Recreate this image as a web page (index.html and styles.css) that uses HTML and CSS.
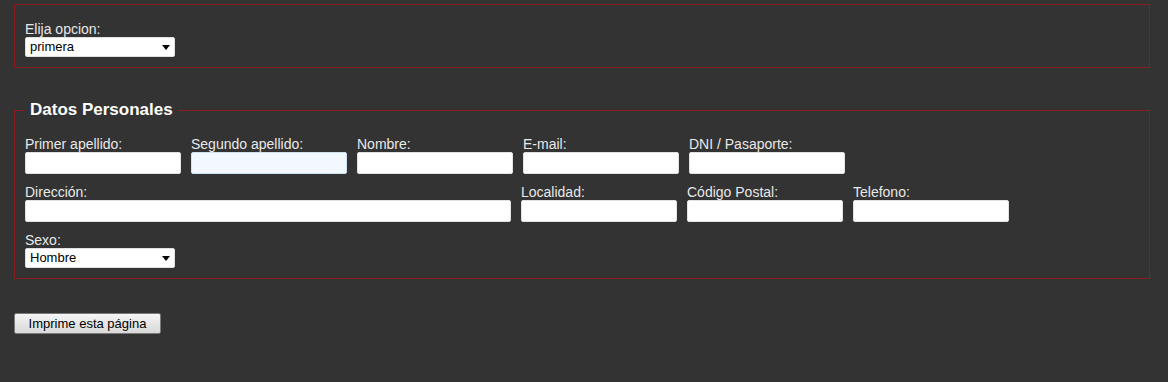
FILE: index.html
```html
<!DOCTYPE html>
<html lang="es">
<head>
<meta charset="utf-8">
<title>Formulario</title>
<link rel="stylesheet" href="styles.css">
</head>
<body>
<form class="form">
  <fieldset class="box box-first">
    <div class="field">
      <label class="lbl">Elija opcion:</label>
      <span class="sel-wrap"><select class="sel"><option>primera</option></select></span>
    </div>
  </fieldset>

  <fieldset class="box box-personal">
    <legend class="legend">Datos Personales</legend>
    <div class="row">
      <div class="field"><label class="lbl">Primer apellido:</label><input class="inp" type="text"></div>
      <div class="field"><label class="lbl">Segundo apellido:</label><input class="inp inp-focus" type="text"></div>
      <div class="field"><label class="lbl">Nombre:</label><input class="inp" type="text"></div>
      <div class="field"><label class="lbl">E-mail:</label><input class="inp" type="text"></div>
      <div class="field"><label class="lbl">DNI / Pasaporte:</label><input class="inp" type="text"></div>
    </div>
    <div class="row">
      <div class="field field-wide"><label class="lbl">Dirección:</label><input class="inp inp-wide" type="text"></div>
      <div class="field"><label class="lbl">Localidad:</label><input class="inp" type="text"></div>
      <div class="field"><label class="lbl">Código Postal:</label><input class="inp" type="text"></div>
      <div class="field"><label class="lbl">Telefono:</label><input class="inp" type="text"></div>
    </div>
    <div class="row row-last">
      <div class="field">
        <label class="lbl">Sexo:</label>
        <span class="sel-wrap sel-sexo"><select class="sel"><option>Hombre</option></select></span>
      </div>
    </div>
  </fieldset>

  <div class="actions">
    <button type="button" class="btn">Imprime esta página</button>
  </div>
</form>
</body>
</html>
```
FILE: styles.css
```css
html, body {
  margin: 0;
  padding: 0;
  background: #333333;
}
body {
  font-family: "Liberation Sans", Arial, sans-serif;
  color: #e6e6e6;
}
.form {
  padding: 4px 18px 0 14px;
}
.box {
  margin: 0;
  border: 1px solid #8a1c22;
  padding: 16px 10px 10px 10px;
  min-width: 0;
}
.box-personal {
  margin-top: 32px;
  padding-top: 16px;
}
.legend {
  font-size: 17px;
  font-weight: bold;
  line-height: 20px;
  color: #ffffff;
  padding: 0 5px;
  margin-left: 0;
}
.row {
  display: flex;
  gap: 10px;
  margin-bottom: 10px;
}
.row-last {
  margin-bottom: 0;
}
.field {
  display: flex;
  flex-direction: column;
  width: 156px;
}
.field-wide {
  width: 486px;
}
.lbl {
  display: block;
  font-size: 14px;
  line-height: 16px;
  height: 16px;
  color: #e8e8e8;
}
.inp {
  box-sizing: border-box;
  width: 156px;
  height: 22px;
  margin: 0;
  border: 1px solid #e2e2e2;
  border-radius: 2px;
  background: #ffffff;
  padding: 0 4px;
  font-family: "Liberation Sans", Arial, sans-serif;
  font-size: 13px;
}
.inp-wide {
  width: 486px;
}
.inp-focus {
  background: #f3f8ff;
  border-color: #cfe2f5;
}
.sel-wrap {
  position: relative;
  display: block;
  width: 150px;
  height: 20px;
}
.sel-wrap::after {
  content: "";
  position: absolute;
  right: 5px;
  top: 8px;
  width: 0;
  height: 0;
  border-left: 4px solid transparent;
  border-right: 4px solid transparent;
  border-top: 5px solid #000000;
  pointer-events: none;
}
.sel {
  -webkit-appearance: none;
  appearance: none;
  box-sizing: border-box;
  width: 150px;
  height: 20px;
  margin: 0;
  border: 1px solid #e0e0e0;
  border-radius: 2px;
  background: #ffffff;
  color: #000000;
  padding: 0 4px;
  font-family: "Liberation Sans", Arial, sans-serif;
  font-size: 13px;
  line-height: 18px;
}
.actions {
  margin-top: 34px;
}
.btn {
  box-sizing: border-box;
  width: 147px;
  height: 21px;
  margin: 0;
  padding: 0;
  border: 1px solid #7a7a7a;
  border-radius: 2px;
  background: linear-gradient(#f6f6f6, #e6e6e6 50%, #d9d9d9);
  color: #000000;
  font-family: "Liberation Sans", Arial, sans-serif;
  font-size: 13px;
  line-height: 19px;
}
```
